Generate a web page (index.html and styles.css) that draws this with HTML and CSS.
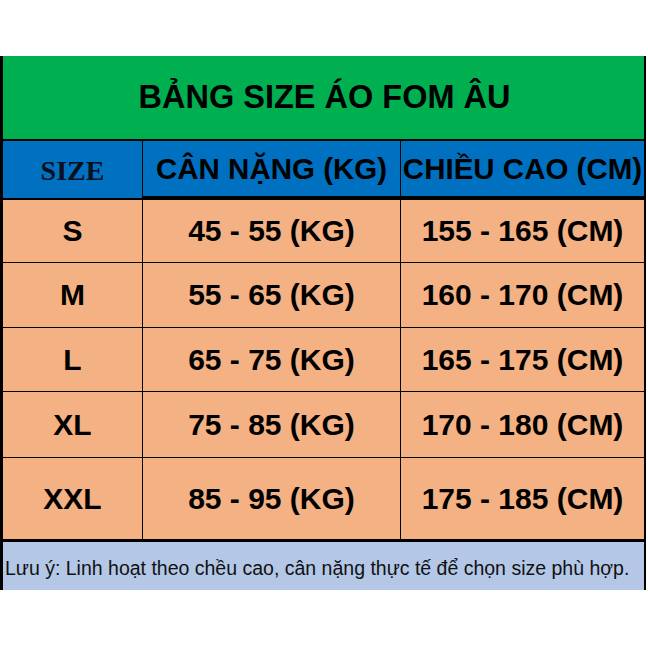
FILE: index.html
```html
<!DOCTYPE html>
<html lang="vi">
<head>
<meta charset="utf-8">
<title>Bảng size áo fom Âu</title>
<link rel="stylesheet" href="styles.css">
</head>
<body>
<div class="sheet">
  <div class="title">BẢNG SIZE ÁO FOM ÂU</div>
  <div class="head">
    <div class="hcell serif">SIZE</div>
    <div class="hcell">CÂN NẶNG (KG)</div>
    <div class="hcell">CHIỀU CAO (CM)</div>
  </div>
  <div class="body">
    <div class="cell">S</div><div class="cell">45 - 55 (KG)</div><div class="cell">155 - 165 (CM)</div>
    <div class="cell">M</div><div class="cell">55 - 65 (KG)</div><div class="cell">160 - 170 (CM)</div>
    <div class="cell">L</div><div class="cell">65 - 75 (KG)</div><div class="cell">165 - 175 (CM)</div>
    <div class="cell">XL</div><div class="cell">75 - 85 (KG)</div><div class="cell">170 - 180 (CM)</div>
    <div class="cell">XXL</div><div class="cell">85 - 95 (KG)</div><div class="cell">175 - 185 (CM)</div>
  </div>
  <div class="note">Lưu ý: Linh hoạt theo chều cao, cân nặng thực tế để chọn size phù hợp.</div>
</div>
</body>
</html>
```
FILE: styles.css
```css
html, body {
  margin: 0;
  padding: 0;
  background: #ffffff;
}
body {
  font-family: "Liberation Sans", Arial, sans-serif;
  color: #000;
}
.sheet {
  margin-top: 56px;
  width: 646px;
  box-sizing: border-box;
  border-left: 3px solid #000;
  border-right: 2px solid #000;
}
.title {
  height: 83px;
  background: #00b050;
  border-bottom: 2px solid #000;
  display: flex;
  align-items: center;
  justify-content: center;
  font-weight: bold;
  font-size: 32.5px;
  padding-left: 2px;
}
.head {
  display: grid;
  grid-template-columns: 139px 257px 243px;
  column-gap: 1px;
  background: #000;
  border-bottom: 2px solid #000;
}
.hcell {
  height: 55px;
  background: #0070c0;
  display: flex;
  align-items: center;
  justify-content: center;
  font-weight: bold;
  font-size: 29.5px;
  white-space: nowrap;
}
.hcell.serif {
  font-family: "Liberation Serif", "Times New Roman", serif;
  font-size: 28px;
  color: #0a1020;
  padding-top: 2px;
}
.body {
  display: grid;
  grid-template-columns: 139px 257px 243px;
  grid-template-rows: 62px 64px 63px 65px 81px;
  gap: 1px;
  background: #000;
}
.cell {
  background: #f4b183;
  display: flex;
  align-items: center;
  justify-content: center;
  font-weight: bold;
  font-size: 30px;
  white-space: nowrap;
}
.note {
  height: 51px;
  box-sizing: border-box;
  border-top: 3px solid #000;
  background: #b4c7e7;
  display: flex;
  align-items: center;
  padding-left: 2px;
  padding-top: 4px;
  font-size: 19.5px;
  color: #111;
  white-space: nowrap;
}
```
